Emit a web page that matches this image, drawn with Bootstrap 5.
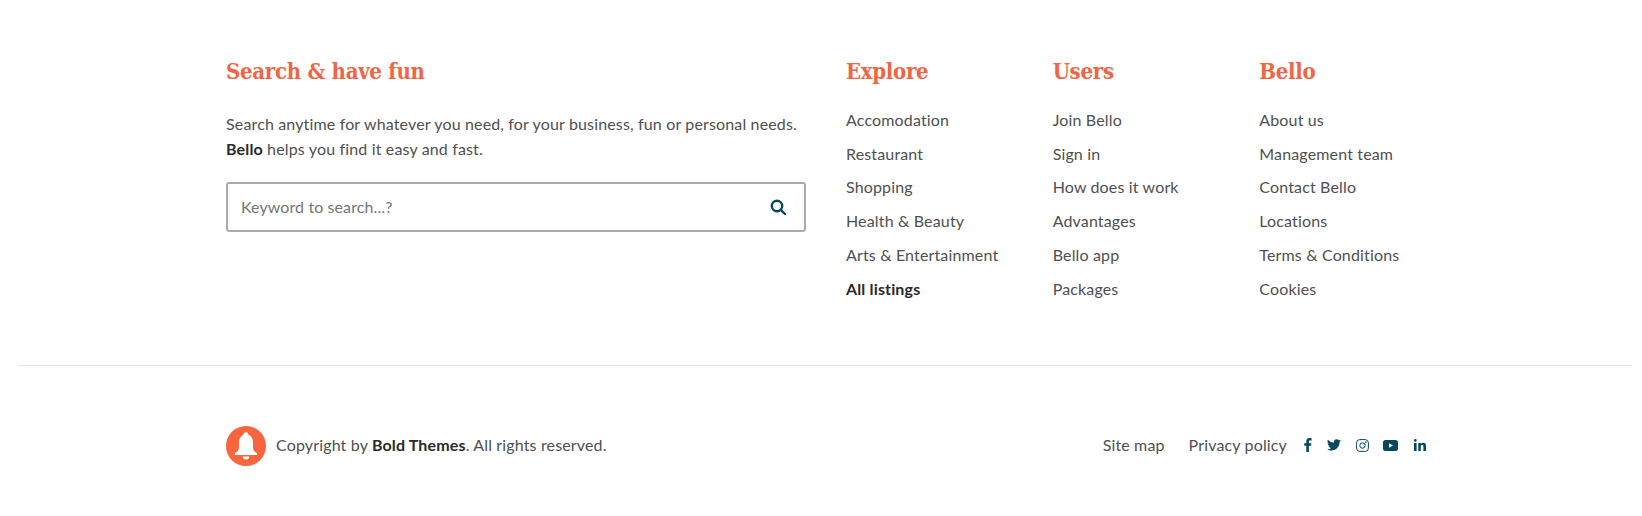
<!DOCTYPE html>
<html lang="en"><head><meta charset="utf-8"><title>Footer</title>
<link href="https://cdn.jsdelivr.net/npm/bootstrap@5.3.0/dist/css/bootstrap.min.css" rel="stylesheet">
<style>
body{font-family:"Lato","Open Sans",sans-serif;font-size:16px;letter-spacing:.15px;color:#505050;background:#fff}
.foot-wrap{width:1240px;margin-left:206px;--bs-gutter-x:40px}
.foot-top{padding-top:54px;height:365px}
.foot-title{font-family:"DejaVu Serif Condensed","DejaVu Serif","Liberation Serif",serif;font-weight:700;font-size:22px;line-height:34px;color:#f06543;margin:0 0 15px;letter-spacing:-.3px}
.foot-text{line-height:25px;padding-top:8px;margin:0 0 21px}
.foot-text strong,.foot-copy strong,.foot-bold{font-weight:700;color:#2a2a2a}
.search-box{width:580px;height:50px;border:2px solid #aaa;border-radius:3px;padding:0 18px 0 13px}
.search-box input{border:0;outline:0;padding:0;font:inherit;letter-spacing:.1px;background:transparent}
.search-box input::placeholder{color:#757575}
.foot-list{line-height:33.7px}
.foot-list a,.foot-links a{color:#505050;text-decoration:none}
.foot-list a.foot-bold{color:#2a2a2a}
.foot-rule{margin:0 10px 0 19px;border-top:1px solid #e4e4e4;opacity:1;height:0}
.foot-bottom{padding-top:60px}
.bell-badge{width:40px;height:40px;background:#f9653d;border-radius:50%}
.foot-copy{margin-left:10px;padding-bottom:2px}
.foot-links{gap:24px;padding-bottom:2px}
.foot-social{margin-left:9px;margin-right:-10px;padding-bottom:2px}
.foot-social a{width:28px;display:flex;justify-content:center;color:#03485f}
.foot-social a:first-child{width:24px}
.foot-social a:last-child{width:32px}
.foot-social svg{fill:currentColor}
</style></head><body>
<div class="foot-top">
<div class="row foot-wrap">
  <div class="col-6">
    <h4 class="foot-title">Search &amp; have fun</h4>
    <p class="foot-text">Search anytime for whatever you need, for your business, fun or personal needs.<br><strong>Bello</strong> helps you find it easy and fast.</p>
    <div class="search-box d-flex align-items-center justify-content-between">
      <input class="flex-grow-1" type="text" placeholder="Keyword to search...?" aria-label="Keyword">
      <svg width="16" height="16" viewBox="0 0 16 16" fill="none" stroke="#03485f" stroke-width="2.4"><circle cx="7" cy="7" r="5.2"/><path d="M10.8 10.8 15 15" stroke-linecap="round"/></svg>
    </div>
  </div>
  <div class="col-2">
    <h4 class="foot-title">Explore</h4>
    <div class="foot-list d-flex flex-column">
      <a href="#">Accomodation</a><a href="#">Restaurant</a><a href="#">Shopping</a><a href="#">Health &amp; Beauty</a><a href="#">Arts &amp; Entertainment</a><a href="#" class="foot-bold">All listings</a>
    </div>
  </div>
  <div class="col-2">
    <h4 class="foot-title">Users</h4>
    <div class="foot-list d-flex flex-column">
      <a href="#">Join Bello</a><a href="#">Sign in</a><a href="#">How does it work</a><a href="#">Advantages</a><a href="#">Bello app</a><a href="#">Packages</a>
    </div>
  </div>
  <div class="col-2">
    <h4 class="foot-title">Bello</h4>
    <div class="foot-list d-flex flex-column">
      <a href="#">About us</a><a href="#">Management team</a><a href="#">Contact Bello</a><a href="#">Locations</a><a href="#">Terms &amp; Conditions</a><a href="#">Cookies</a>
    </div>
  </div>
</div>
</div>
<div class="foot-rule"></div>
<div class="foot-bottom">
<div class="row foot-wrap align-items-center">
  <div class="col-6 d-flex align-items-center">
    <div class="bell-badge d-flex align-items-center justify-content-center">
      <svg width="26" height="28" viewBox="0 0 26 28" fill="#fff"><circle cx="13" cy="2.6" r="2.4"/><path d="M13 2.500c-4.600 0-7 3.300-7 8v4.500C6 18.500 4.300 20 1.800 21.200V23h22.400v-1.800C21.700 20 20 18.500 20 15v-4.500c0-4.700-2.400-8-7-8z"/><path d="M9.700 24.500h6.600A3.300 3.300 0 0 1 13 27.500a3.300 3.300 0 0 1-3.300-3z"/></svg>
    </div>
    <div class="foot-copy">Copyright by <strong>Bold Themes</strong>. All rights reserved.</div>
  </div>
  <div class="col-6 d-flex align-items-center justify-content-end">
    <div class="foot-links d-flex"><a href="#">Site map</a><a href="#">Privacy policy</a></div>
    <div class="foot-social d-flex align-items-center">
      <a href="#" aria-label="Facebook"><svg width="8" height="14" viewBox="0 0 8 14"><path d="M2.300 14V7.700H.2V5.200h2.100V3.400C2.300 1.200 3.600 0 5.600 0c.9 0 1.700.1 1.900.1v2.300H6.200c-1.100 0-1.300.5-1.300 1.300v1.500h2.500l-.3 2.500H4.900V14z"/></svg></a>
      <a href="#" aria-label="Twitter"><svg width="14" height="12" viewBox="0 0 24 20"><path d="M24 2.400c-.9.400-1.800.7-2.800.8 1-.6 1.800-1.600 2.200-2.700-.9.600-2 1-3.100 1.200A4.900 4.900 0 0 0 11.900 6.200 14 14 0 0 1 1.700.9a4.900 4.900 0 0 0 1.500 6.600c-.8 0-1.600-.2-2.200-.6 0 2.400 1.700 4.400 3.900 4.900-.7.200-1.500.2-2.200.1.600 2 2.400 3.400 4.600 3.400A9.900 9.900 0 0 1 0 17.300 14 14 0 0 0 7.500 19.500c9.100 0 14.300-7.700 14-14.600 1-.7 1.800-1.600 2.500-2.500z"/></svg></a>
      <a href="#" aria-label="Instagram"><svg width="13" height="13" viewBox="0 0 13 13" stroke="currentColor"><rect x=".6" y=".6" width="11.800" height="11.800" rx="3.200" fill="none"/><circle cx="6.500" cy="6.500" r="2.700" fill="none"/><circle cx="9.900" cy="3.100" r=".4"/></svg></a>
      <a href="#" aria-label="YouTube"><svg width="15" height="11" viewBox="0 0 15 11"><path fill-rule="evenodd" d="M2.500 0h10A2.500 2.500 0 0 1 15 2.500v6a2.500 2.500 0 0 1-2.500 2.500h-10A2.500 2.500 0 0 1 0 8.500v-6A2.500 2.500 0 0 1 2.500 0zM6 3.200v4.600L10 5.500z"/></svg></a>
      <a href="#" aria-label="LinkedIn"><svg width="12" height="12" viewBox="0 0 12 12"><rect x="0" y="4" width="2.600" height="8"/><circle cx="1.300" cy="1.400" r="1.400"/><path d="M4.300 4h2.500v1.100C7.200 4.400 8.100 3.800 9.300 3.800c2.200 0 2.700 1.500 2.700 3.500V12H9.400V7.800c0-1-.1-2-1.300-2-1.200 0-1.300 1-1.300 2V12H4.300z"/></svg></a>
    </div>
  </div>
</div>
</div>
<script src="https://cdn.jsdelivr.net/npm/bootstrap@5.3.0/dist/js/bootstrap.bundle.min.js"></script>
</body></html>
